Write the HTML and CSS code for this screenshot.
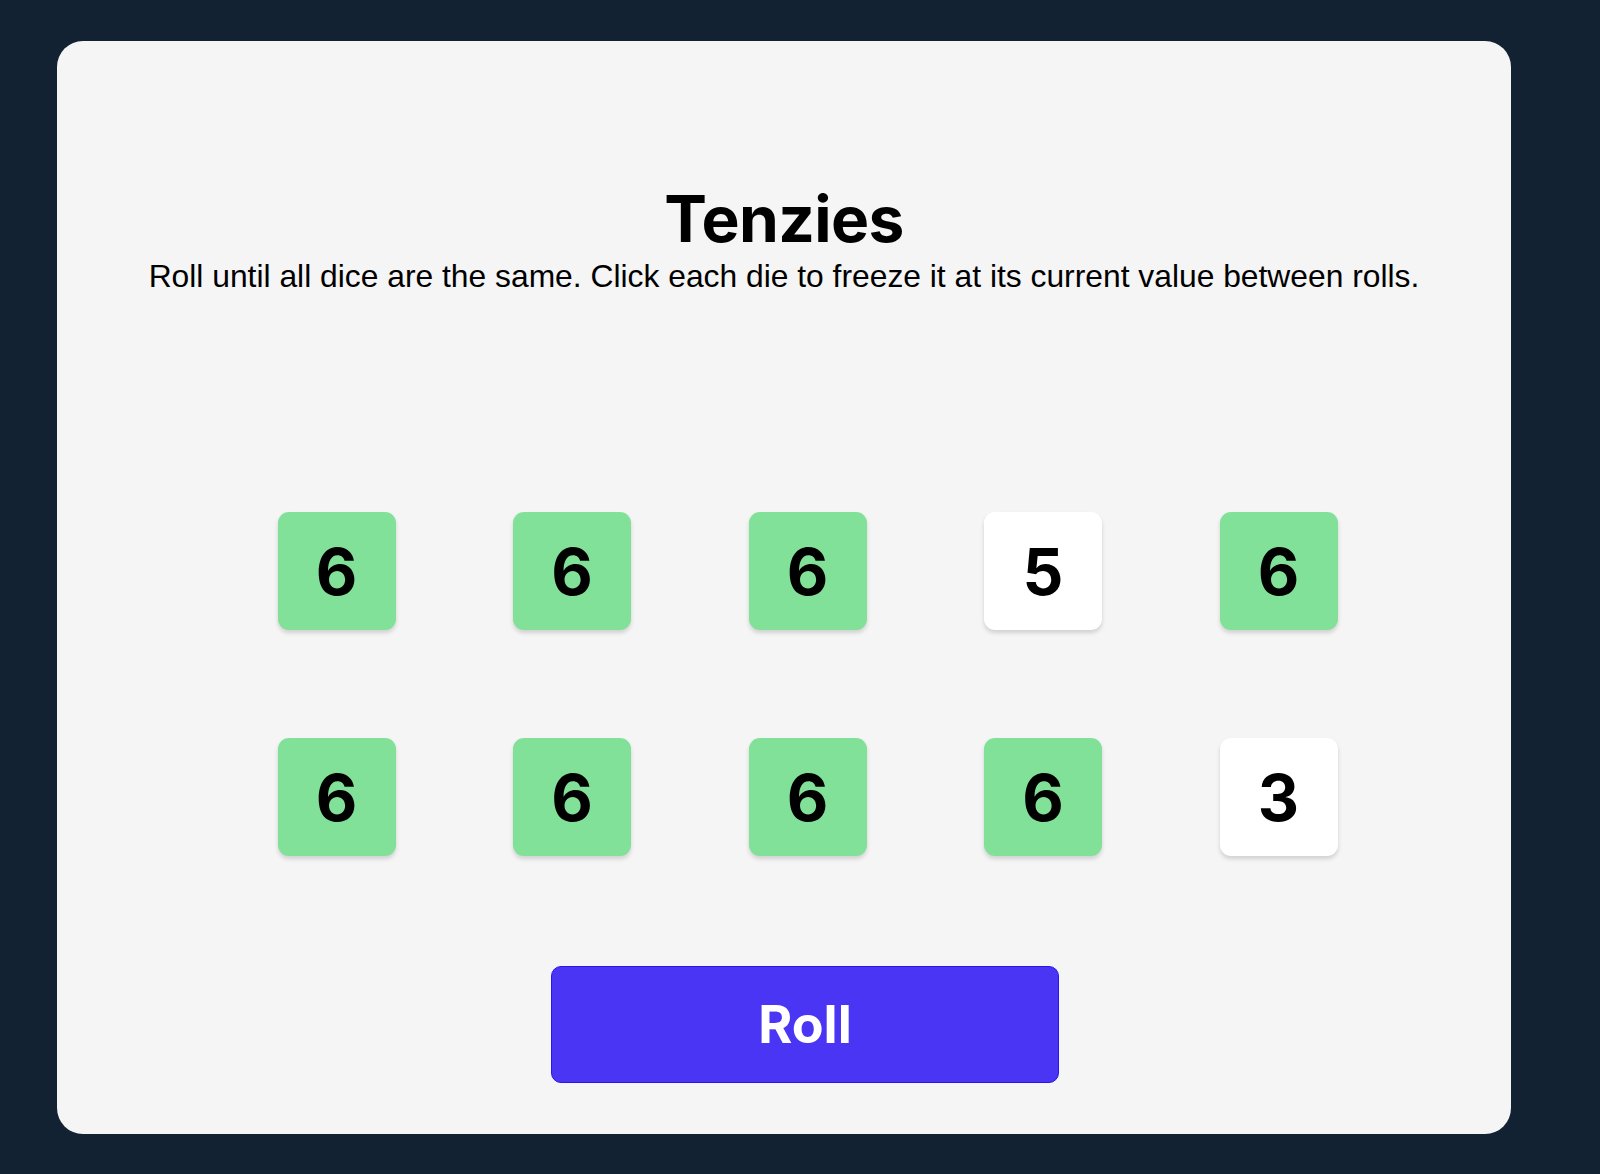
FILE: index.html
```html
<!DOCTYPE html>
<html lang="en">
<head>
<meta charset="utf-8">
<title>Tenzies</title>
<link rel="stylesheet" href="styles.css">
</head>
<body>
<div class="page">
  <main class="card">
    <h1 class="title">Tenzies</h1>
    <p class="instructions">Roll until all dice are the same. Click each die to freeze it at its current value between rolls.</p>
    <div class="dice-grid">
      <button class="die held">6</button>
      <button class="die held">6</button>
      <button class="die held">6</button>
      <button class="die">5</button>
      <button class="die held">6</button>
      <button class="die held">6</button>
      <button class="die held">6</button>
      <button class="die held">6</button>
      <button class="die held">6</button>
      <button class="die">3</button>
    </div>
    <div class="roll-wrap">
      <button class="roll-btn">Roll</button>
    </div>
  </main>
</div>
</body>
</html>
```
FILE: styles.css
```css
* { box-sizing: border-box; }
html, body { margin: 0; padding: 0; }
body {
  background: #132233;
  font-family: "Liberation Sans", Arial, sans-serif;
}
.page {
  padding: 41px 89px 40px 57px;
}
.card {
  height: 1093px;
  background: #f5f5f5;
  border-radius: 26px;
  display: flex;
  flex-direction: column;
  align-items: center;
  padding-top: 146px;
}
.title {
  margin: 0;
  font-family: Inter, "Liberation Sans", sans-serif;
  font-weight: 700;
  font-size: 64px;
  line-height: 1;
  letter-spacing: -0.6px;
  color: #000;
}
.instructions {
  margin: 7px 0 0;
  font-size: 31.8px;
  line-height: 36px;
  color: #000;
}
.dice-grid {
  margin-top: 218px;
  padding-left: 47px;
  display: grid;
  grid-template-columns: repeat(5, 118px);
  column-gap: 117.5px;
  row-gap: 108px;
}
.die {
  width: 118px;
  height: 118px;
  border: none;
  border-radius: 11px;
  background: #ffffff;
  box-shadow: 0 3px 4px rgba(0, 0, 0, 0.15);
  font-family: Inter, "Liberation Sans", sans-serif;
  font-weight: 700;
  font-size: 64px;
  color: #000;
  display: flex;
  align-items: center;
  justify-content: center;
  padding: 0;
}
.die.held {
  background: #82e198;
}
.roll-wrap {
  margin-top: 110px;
  padding-left: 42px;
}
.roll-btn {
  width: 508px;
  height: 117px;
  border: 1px solid #2b14f0;
  border-radius: 10px;
  background: #4b35f5;
  color: #fff;
  font-family: Inter, "Liberation Sans", sans-serif;
  font-weight: 700;
  font-size: 52px;
}
```
